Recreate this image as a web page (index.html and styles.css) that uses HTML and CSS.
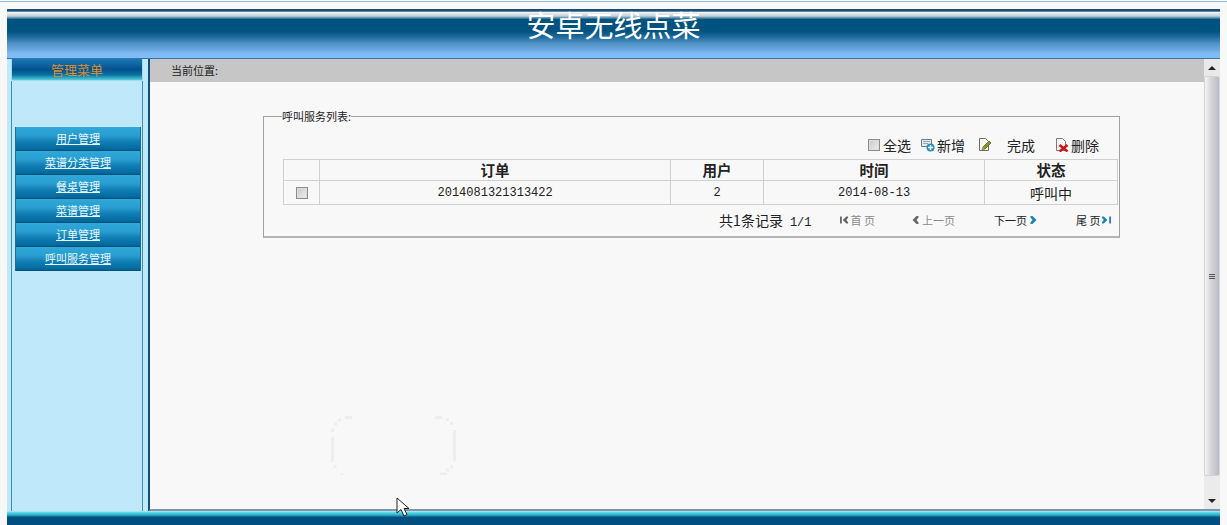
FILE: index.html
```html
<!DOCTYPE html>
<html>
<head>
  <meta charset="utf-8">
  <link rel="stylesheet" href="styles.css">
</head>
<body>
  <div class="top-line"></div>
  <div class="frame">
    <div class="header">
      <h1>安卓无线点菜</h1>
    </div>

    <div class="middle">
      <div class="sidebar">
        <div class="menu-title">管理菜单</div>
        <div class="menu-list">
          <a class="menu-item" href="#">用户管理</a>
          <a class="menu-item" href="#">菜谱分类管理</a>
          <a class="menu-item" href="#">餐桌管理</a>
          <a class="menu-item" href="#">菜谱管理</a>
          <a class="menu-item" href="#">订单管理</a>
          <a class="menu-item" href="#">呼叫服务管理</a>
        </div>
      </div>

      <div class="main">
        <div class="location">当前位置:</div>
        <div class="content">
          <fieldset class="box">
            <legend>呼叫服务列表:</legend>
            <div class="toolbar">
              <span class="tool tool-all"><span class="check"></span>全选</span>
              <span class="tool tool-add">
                <svg class="icon" viewBox="0 0 14 14">
                  <path d="M.5 1.500h10v7H.5z" fill="#e6e9ee" stroke="#6f7b88"/>
                  <path d="M2 3.500h7M2 5.500h5" stroke="#98a4b0"/>
                  <circle cx="9.500" cy="9.500" r="4" fill="#1e8fc8"/>
                  <path d="M9.500 7v5M7 9.500h5" stroke="#fff" stroke-width="1.500"/>
                </svg>新增
              </span>
              <span class="tool tool-edit">
                <svg class="icon" viewBox="0 0 14 14">
                  <path d="M1.500 .5h6l3 3v9h-9z" fill="#f6f6f2" stroke="#6f6f6f"/>
                  <path d="M4 12l1-3 6-6 2 2-6 6z" fill="#7d9a2a" stroke="#4d4a1a" stroke-width=".7"/>
                  <path d="M4 12l1-3 2 2z" fill="#e0a030"/>
                </svg>
              </span>
              <span class="tool tool-done">完成</span>
              <span class="tool tool-del">
                <svg class="icon" viewBox="0 0 14 14">
                  <path d="M1.500 .5h6l3 3v9h-9z" fill="#f4f4f4" stroke="#7b7b7b"/>
                  <path d="M4.500 7l8 6.500M12.500 7l-8 6.500" stroke="#c8191e" stroke-width="2.600"/>
                </svg>删除
              </span>
            </div>

            <table class="list">
              <tr>
                <th class="col-check"></th>
                <th class="col-order">订单</th>
                <th class="col-user">用户</th>
                <th class="col-time">时间</th>
                <th>状态</th>
              </tr>
              <tr>
                <td><span class="check"></span></td>
                <td class="num">2014081321313422</td>
                <td class="num">2</td>
                <td class="num">2014-08-13</td>
                <td>呼叫中</td>
              </tr>
            </table>

            <div class="pager">
              <span class="count">共1条记录<span class="num">1/1</span></span>
              <span class="page page-first off">
                <svg class="arrow" viewBox="0 0 10 8"><path d="M0 0h2v8H0zM9 0v1.500L7 4l2 2.500V8H7L3 4l4-4z" fill="#666"/></svg>首 页
              </span>
              <span class="page page-prev off">
                <svg class="arrow" viewBox="0 0 8 8"><path d="M7 0v1.500L5 4l2 2.500V8H5L1 4l4-4z" fill="#666"/></svg>上一页
              </span>
              <span class="page page-next">下一页
                <svg class="arrow" viewBox="0 0 8 8"><path d="M1 0v1.500L3 4 1 6.500V8h2l4-4-4-4z" fill="#1786a8"/></svg>
              </span>
              <span class="page page-last">尾 页
                <svg class="arrow" viewBox="0 0 10 8"><path d="M0 0v1.500L2 4 0 6.500V8h2l4-4-4-4z" fill="#1786a8"/><path d="M8 0h2v8H8z" fill="#3a6fd0"/></svg>
              </span>
            </div>
          </fieldset>

          <svg class="ghost" viewBox="0 0 126 60">
            <path d="M14 2.500h7M7 5h3M3 9h3M1.500 14v3M1.500 22v25M4 50v3M11 58v3M104 2.500h7M115 4.500h3M119 8.500h3M123.500 15v31M119 52h3M115 55h3M109 59h7" fill="none" stroke="#eeeeee" stroke-width="3"/>
          </svg>
        </div>
      </div>

      <div class="scrollbar">
        <div class="scroll-up"></div>
        <div class="scroll-thumb"><span class="grip"></span></div>
        <div class="scroll-track"><span class="scroll-down"></span></div>
      </div>
    </div>

    <div class="footer"></div>
  </div>

  <svg class="cursor" viewBox="0 0 13 20">
    <path d="M1 1v15l4-3.500 3 6.500 3-1.500-3-6h5z" fill="#fff" stroke="#222"/>
  </svg>
</body>
</html>
```

FILE: styles.css
```css
* {
  margin: 0;
  padding: 0;
  box-sizing: border-box;
}

html, body {
  height: 525px;
  overflow: hidden;
}

body {
  background: #f8f8f8;
  color: #222;
  font-family: "Noto Sans CJK SC", "Liberation Sans", sans-serif;
  font-size: 12px;
  position: relative;
}

.top-line {
  height: 2px;
  border-top: 1px solid #fff;
  background: #8dbbe0;
}

.frame {
  height: 523px;
  padding: 7px 7px 0 7px;
  display: flex;
  flex-direction: column;
}

.header {
  height: 50px;
  overflow: hidden;
  text-align: center;
  background: linear-gradient(180deg, #1d4f74 0, #1d4f74 4%, #eef3f5 7%, #c4d2da 14%, #00527f 21%, #00527f 44%, #1f6a9c 56%, #4f8fc4 68%, #6aa6dc 80%, #80bcf8 90%, #80bcf8 97%, #1d4f74 100%);
}

.header h1 {
  font-family: "Liberation Serif", "Noto Sans CJK SC", serif;
  font-size: 29px;
  font-weight: 400;
  line-height: 37px;
  color: #fff;
}

.middle {
  flex: 1;
  min-height: 0;
  display: flex;
  background: #f4f4f4;
}

.sidebar {
  width: 143px;
  padding: 0 5px 0 4px;
  background: #bfe9fa;
  border-right: 1px solid #0f4f7c;
  display: flex;
  flex-direction: column;
}

.menu-title {
  height: 22px;
  line-height: 21px;
  font-size: 13px;
  text-align: center;
  color: #dd8c2e;
  border: 1px solid #9fdcf0;
  border-top: none;
  border-radius: 0 0 2px 2px;
  background: linear-gradient(180deg, #1a78b4 0, #00528f 50%, #0b6f9f 75%, #4fd0dc 100%);
}

.menu-list {
  flex: 1;
  padding: 46px 1px 0 3px;
  background: #bfe9fa;
  border-left: 1px solid #3f8fae;
  border-right: 1px solid #3f8fae;
}

.menu-item {
  display: block;
  height: 24px;
  line-height: 23px;
  text-align: center;
  font-size: 11px;
  color: #e8f8ff;
  background: linear-gradient(180deg, #2fa8da 0, #2a9ed0 35%, #127fb4 60%, #006a9f 92%, #0a4a6c 100%);
  border-left: 1px solid #1a6f90;
  border-right: 1px solid #1a6f90;
}

.main {
  width: 1055px;
  display: flex;
  flex-direction: column;
  background: #f8f8f8;
  border-left: 1px solid #0f4f7c;
  border-bottom: 2px solid #7f94b0;
}

.location {
  height: 23px;
  line-height: 22px;
  padding-left: 21px;
  font-size: 11px;
  background: #c6c6c6;
  flex: none;
}

.content {
  flex: 1;
  padding: 27px 84px 0 113px;
  position: relative;
}

.box {
  height: 129px;
  padding: 0 1px 0 19px;
  border: 1px solid #a0a0a0;
  border-bottom: 2px solid #b4b4b4;
}

.box legend {
  margin-left: -1px;
  font-size: 11px;
  line-height: 14px;
}

.toolbar {
  height: 36px;
  font-size: 14px;
  line-height: 20px;
  padding-top: 12px;
  display: flex;
}

.tool {
  display: flex;
  align-items: center;
  height: 20px;
}

.tool-all { margin-left: 585px; }
.tool-add { margin-left: 10px; }
.tool-edit { margin-left: 13px; }
.tool-done { margin-left: 13px; }
.tool-del { margin-left: 20px; }

.icon {
  width: 14px;
  height: 14px;
  margin-right: 2px;
}

.check {
  display: inline-block;
  width: 12px;
  height: 12px;
  margin-right: 3px;
  border: 1px solid #8c8c8c;
  background: linear-gradient(135deg, #c8c8c8, #f0f0f0);
  box-shadow: inset 0 0 0 1px #dcdcdc;
}

.list {
  width: 835px;
  table-layout: fixed;
  border-collapse: collapse;
}

.list th, .list td {
  border: 1px solid #d0d0d0;
  text-align: center;
  font-size: 14px;
  line-height: 18px;
}

.list th {
  height: 21px;
  font-size: 14.500px;
  font-weight: 700;
}

.list td {
  height: 24px;
}

.list td .check {
  display: block;
  margin: 0 auto;
}

.col-check { width: 36px; }
.col-order { width: 351px; }
.col-user { width: 93px; }
.col-time { width: 221px; }

.list td.num, .num {
  font-family: "Liberation Mono", monospace;
  font-size: 12px;
}

.count .num {
  margin-left: 7px;
}

.pager {
  height: 30px;
  display: flex;
  align-items: center;
  font-size: 11px;
  color: #222;
}

.count {
  font-size: 14px;
  margin-left: 436px;
}

.page {
  display: flex;
  align-items: center;
  gap: 2px;
}

.page.off { color: #8a8a8a; }
.page-first { margin-left: 28px; }
.page-prev { margin-left: 36px; }
.page-next { margin-left: 39px; }
.page-last { margin-left: 38px; }

.arrow {
  width: 9px;
  height: 8px;
}

.ghost {
  position: absolute;
  left: 181px;
  top: 333px;
  width: 126px;
  height: 60px;
}

.scrollbar {
  width: 16px;
  display: flex;
  flex-direction: column;
  background: #e9e9e9;
  border-bottom: 2px solid #7f94b0;
}

.scroll-up {
  height: 17px;
  position: relative;
}

.scroll-up::after {
  content: "";
  position: absolute;
  left: 4px;
  top: 7px;
  border: 4px solid transparent;
  border-top: none;
  border-bottom: 4px solid #222;
}

.scroll-thumb {
  height: 400px;
  display: flex;
  align-items: center;
  justify-content: center;
  background: linear-gradient(90deg, #f4f4f4 0, #d8d8d8 40%, #b9bcc6 100%);
  border: 1px solid #d4d4d4;
  border-radius: 2px;
}

.grip {
  width: 6px;
  height: 5px;
  background: repeating-linear-gradient(180deg, #555 0, #555 1px, transparent 1px, transparent 2px);
}

.scroll-track {
  flex: 1;
  position: relative;
  background: #ebebeb;
}

.scroll-down {
  position: absolute;
  left: 4px;
  bottom: 6px;
  border: 4px solid transparent;
  border-bottom: none;
  border-top: 4px solid #222;
}

.footer {
  height: 14px;
  background: linear-gradient(180deg, #bff0f6 0, #4fd6e0 12%, #2fb4cc 28%, #004f80 45%, #004f80 100%);
}

.cursor {
  position: absolute;
  left: 396px;
  top: 497px;
  width: 13px;
  height: 20px;
}
```
